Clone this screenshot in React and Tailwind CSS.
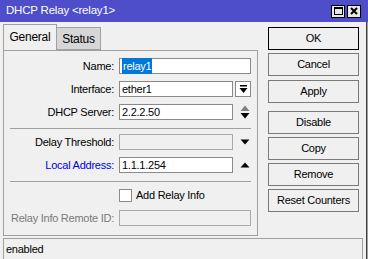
const font = { fontFamily: '"Liberation Sans", Arial, sans-serif' };

function DropArrow() {
  return (
    <svg width="9" height="9" viewBox="0 0 9 9">
      <rect x="1" y="0" width="7" height="1.5" fill="#000" />
      <path d="M0.5 3 H8.5 L4.5 8 Z" fill="#000" />
    </svg>
  );
}

function UpDown() {
  return (
    <svg width="10" height="14" viewBox="0 0 10 14">
      <path d="M5 0.5 L9.5 6 H0.5 Z" fill="#808080" />
      <path d="M0.5 8 H9.5 L5 13.5 Z" fill="#000" />
    </svg>
  );
}

function Down() {
  return (
    <svg width="10" height="6" viewBox="0 0 10 6">
      <path d="M0.5 0.5 H9.5 L5 5.5 Z" fill="#000" />
    </svg>
  );
}

function Up() {
  return (
    <svg width="10" height="6" viewBox="0 0 10 6">
      <path d="M5 0.5 L9.5 5.5 H0.5 Z" fill="#000" />
    </svg>
  );
}

function Field({ label, labelClass = "text-black", children, className = "" }) {
  return (
    <div className={`flex h-[16px] items-center ${className}`}>
      <div className={`w-[111px] pr-[1px] text-right ${labelClass}`}>{label}</div>
      <div className="ml-[4px] flex items-center">{children}</div>
    </div>
  );
}

function Box({ children, w = "w-[114px]", muted = false }) {
  return (
    <div
      className={`flex h-[16px] ${w} items-center border px-[2px] ${muted ? "border-[#a9a9a9] bg-[#f0f0f0]" : "border-[#8a8a8a] bg-white"}`}
    >
      {children}
    </div>
  );
}

function Btn({ children, className = "", ok = false }) {
  return (
    <div
      className={`flex h-[23px] w-[91px] items-center justify-center border bg-[#f0f0f0] text-black ${ok ? "border-black" : "border-[#7a7a7a]"} ${className}`}
    >
      {children}
    </div>
  );
}

export default function App() {
  return (
    <div style={font} className="relative h-[259px] w-[368px] overflow-hidden bg-[#f0f0f0] text-[11px] tracking-[-0.25px] text-black">
      <div className="flex h-[22px] items-center bg-[#4e4ecb] pl-[6px] pr-[7px]">
        <span className="flex-1 text-[11.5px] tracking-[-0.2px] text-white">DHCP Relay &lt;relay1&gt;</span>
        <div className="flex gap-[2px]">
          <div className="flex h-[13px] w-[14px] items-center justify-center border border-black bg-[#e8e8e8]">
            <div className="h-[8px] w-[9px] border border-t-2 border-black" />
          </div>
          <div className="flex h-[13px] w-[14px] items-center justify-center border border-black bg-[#e8e8e8]">
            <svg width="8" height="8" viewBox="0 0 8 8">
              <path d="M1 1 L7 7 M7 1 L1 7" stroke="#000" strokeWidth="2" />
            </svg>
          </div>
        </div>
      </div>

      <div className="flex">
        <div className="ml-[3px] w-[255px]">
          <div className="mt-[2px] flex items-start">
            <div className="relative z-10 -mb-px flex h-[26px] w-[54px] items-center justify-center border border-b-0 border-[#a0a0a0] bg-[#f0f0f0] pb-[2px] text-[12px]">
              General
            </div>
            <div className="mt-[3px] flex h-[23px] w-[44px] items-center justify-center border border-l-0 border-[#a0a0a0] bg-[#d6d6d6] text-[12px]">
              Status
            </div>
          </div>
          <div className="h-[186px] border border-[#a0a0a0] pt-[7px]">
            <Field label="Name:">
              <Box w="w-[132px]">
                <span className="bg-[#0078d7] px-[1px] text-white">relay1</span>
              </Box>
            </Field>
            <Field label="Interface:" className="mt-[7px]">
              <Box>ether1</Box>
              <div className="ml-[2px] flex h-[16px] w-[16px] items-center justify-center border border-[#8a8a8a] bg-white">
                <DropArrow />
              </div>
            </Field>
            <Field label="DHCP Server:" className="mt-[7px]">
              <Box>2.2.2.50</Box>
              <div className="ml-[7px]">
                <UpDown />
              </div>
            </Field>
            <div className="ml-[6px] mt-[8px] h-px w-[241px] bg-[#a0a0a0]" />
            <Field label="Delay Threshold:" className="mt-[5px]">
              <Box muted />
              <div className="ml-[7px] flex items-center">
                <Down />
              </div>
            </Field>
            <Field label="Local Address:" labelClass="text-[#0000e0]" className="mt-[7px]">
              <Box>1.1.1.254</Box>
              <div className="ml-[7px] flex items-center">
                <Up />
              </div>
            </Field>
            <div className="ml-[6px] mt-[8px] h-px w-[241px] bg-[#a0a0a0]" />
            <div className="ml-[115px] mt-[7px] flex h-[13px] items-center">
              <div className="h-[13px] w-[13px] border border-[#8a8a8a] bg-white" />
              <span className="ml-[4px]">Add Relay Info</span>
            </div>
            <Field label="Relay Info Remote ID:" labelClass="text-[#7a7a7a]" className="mt-[8px]">
              <Box w="w-[132px]" muted />
            </Field>
          </div>
        </div>

        <div className="ml-[10px] mt-[5px] flex flex-col">
          <Btn ok>OK</Btn>
          <Btn className="mt-[3px]">Cancel</Btn>
          <Btn className="mt-[4px]">Apply</Btn>
          <Btn className="mt-[8px]">Disable</Btn>
          <Btn className="mt-[3px]">Copy</Btn>
          <Btn className="mt-[3px]">Remove</Btn>
          <Btn className="mt-[3px]">Reset Counters</Btn>
        </div>
      </div>

      <div className="ml-[3px] mt-[2px] h-[30px] w-[360px] border border-[#a0a0a0] pl-[2px] pt-[3px] leading-[14px]">
        enabled
      </div>
      <div className="absolute right-0 top-[22px] h-[237px] w-[2px] border-l border-[#404040] bg-[#a0a0a0]" />
    </div>
  );
}
